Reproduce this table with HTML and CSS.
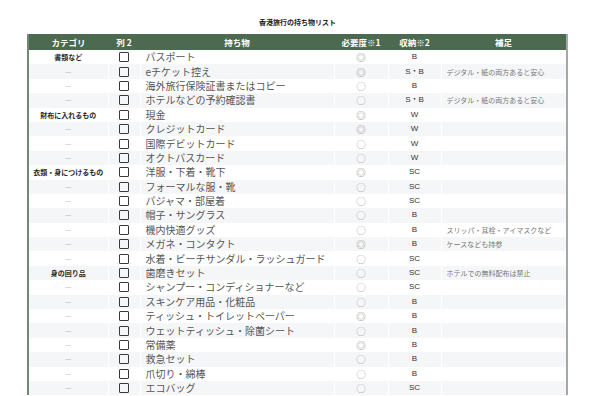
FILE: index.html
```html
<!DOCTYPE html>
<html lang="ja">
<head>
<meta charset="utf-8">
<title>香港旅行の持ち物リスト</title>
<link rel="stylesheet" href="styles.css">
</head>
<body>
<div class="page">
  <h1 class="title">香港旅行の持ち物リスト</h1>
  <table class="list">
    <colgroup>
      <col class="c-cat"><col class="c-chk"><col class="c-item"><col class="c-need"><col class="c-store"><col class="c-note">
    </colgroup>
    <thead>
      <tr><th>カテゴリ</th><th>列 2</th><th>持ち物</th><th>必要度※1</th><th>収納※2</th><th>補足</th></tr>
    </thead>
    <tbody>
      <tr><td class="cat">書類など</td><td class="chk"><span class="box"></span></td><td class="item">パスポート</td><td class="need dbl">◎</td><td class="store">B</td><td class="note"></td></tr>
      <tr><td class="cat dash">—</td><td class="chk"><span class="box"></span></td><td class="item">eチケット控え</td><td class="need dbl">◎</td><td class="store">S・B</td><td class="note">デジタル・紙の両方あると安心</td></tr>
      <tr><td class="cat dash">—</td><td class="chk"><span class="box"></span></td><td class="item">海外旅行保険証書またはコピー</td><td class="need">○</td><td class="store">B</td><td class="note"></td></tr>
      <tr><td class="cat dash">—</td><td class="chk"><span class="box"></span></td><td class="item">ホテルなどの予約確認書</td><td class="need">○</td><td class="store">S・B</td><td class="note">デジタル・紙の両方あると安心</td></tr>
      <tr><td class="cat">財布に入れるもの</td><td class="chk"><span class="box"></span></td><td class="item">現金</td><td class="need dbl">◎</td><td class="store">W</td><td class="note"></td></tr>
      <tr><td class="cat dash">—</td><td class="chk"><span class="box"></span></td><td class="item">クレジットカード</td><td class="need dbl">◎</td><td class="store">W</td><td class="note"></td></tr>
      <tr><td class="cat dash">—</td><td class="chk"><span class="box"></span></td><td class="item">国際デビットカード</td><td class="need">○</td><td class="store">W</td><td class="note"></td></tr>
      <tr><td class="cat dash">—</td><td class="chk"><span class="box"></span></td><td class="item">オクトパスカード</td><td class="need">○</td><td class="store">W</td><td class="note"></td></tr>
      <tr><td class="cat">衣類・身につけるもの</td><td class="chk"><span class="box"></span></td><td class="item">洋服・下着・靴下</td><td class="need dbl">◎</td><td class="store">SC</td><td class="note"></td></tr>
      <tr><td class="cat dash">—</td><td class="chk"><span class="box"></span></td><td class="item">フォーマルな服・靴</td><td class="need">○</td><td class="store">SC</td><td class="note"></td></tr>
      <tr><td class="cat dash">—</td><td class="chk"><span class="box"></span></td><td class="item">パジャマ・部屋着</td><td class="need">○</td><td class="store">SC</td><td class="note"></td></tr>
      <tr><td class="cat dash">—</td><td class="chk"><span class="box"></span></td><td class="item">帽子・サングラス</td><td class="need">○</td><td class="store">B</td><td class="note"></td></tr>
      <tr><td class="cat dash">—</td><td class="chk"><span class="box"></span></td><td class="item">機内快適グッズ</td><td class="need">○</td><td class="store">B</td><td class="note">スリッパ・耳栓・アイマスクなど</td></tr>
      <tr><td class="cat dash">—</td><td class="chk"><span class="box"></span></td><td class="item">メガネ・コンタクト</td><td class="need dbl">◎</td><td class="store">B</td><td class="note">ケースなども持参</td></tr>
      <tr><td class="cat dash">—</td><td class="chk"><span class="box"></span></td><td class="item">水着・ビーチサンダル・ラッシュガード</td><td class="need">○</td><td class="store">SC</td><td class="note"></td></tr>
      <tr><td class="cat">身の回り品</td><td class="chk"><span class="box"></span></td><td class="item">歯磨きセット</td><td class="need">○</td><td class="store">SC</td><td class="note">ホテルでの無料配布は禁止</td></tr>
      <tr><td class="cat dash">—</td><td class="chk"><span class="box"></span></td><td class="item">シャンプー・コンディショナーなど</td><td class="need">○</td><td class="store">SC</td><td class="note"></td></tr>
      <tr><td class="cat dash">—</td><td class="chk"><span class="box"></span></td><td class="item">スキンケア用品・化粧品</td><td class="need">○</td><td class="store">B</td><td class="note"></td></tr>
      <tr><td class="cat dash">—</td><td class="chk"><span class="box"></span></td><td class="item">ティッシュ・トイレットペーパー</td><td class="need dbl">◎</td><td class="store">B</td><td class="note"></td></tr>
      <tr><td class="cat dash">—</td><td class="chk"><span class="box"></span></td><td class="item">ウェットティッシュ・除菌シート</td><td class="need">○</td><td class="store">B</td><td class="note"></td></tr>
      <tr><td class="cat dash">—</td><td class="chk"><span class="box"></span></td><td class="item">常備薬</td><td class="need dbl">◎</td><td class="store">B</td><td class="note"></td></tr>
      <tr><td class="cat dash">—</td><td class="chk"><span class="box"></span></td><td class="item">救急セット</td><td class="need">○</td><td class="store">B</td><td class="note"></td></tr>
      <tr><td class="cat dash">—</td><td class="chk"><span class="box"></span></td><td class="item">爪切り・綿棒</td><td class="need">○</td><td class="store">B</td><td class="note"></td></tr>
      <tr><td class="cat dash">—</td><td class="chk"><span class="box"></span></td><td class="item">エコバッグ</td><td class="need">○</td><td class="store">SC</td><td class="note"></td></tr>
    </tbody>
  </table>
</div>
</body>
</html>
```

FILE: styles.css
```css
html, body {
  margin: 0;
  padding: 0;
  background: #fff;
}
body {
  font-family: "Noto Sans CJK JP", "Noto Sans", "Liberation Sans", sans-serif;
  color: #333;
}
.page {
  padding: 18px 0 0 27px;
  width: 541px;
}
.title {
  margin: 0 0 8px 0;
  font-size: 7px;
  line-height: 8px;
  font-weight: 700;
  color: #222;
  text-align: center;
}
.list {
  width: 541px;
  table-layout: fixed;
  border-collapse: collapse;
  border-left: 2px solid #6f8a74;
  border-right: 2px solid #a5a9a6;
}
.c-cat { width: 80px; }
.c-chk { width: 32px; }
.c-item { width: 194px; }
.c-need { width: 54px; }
.c-store { width: 53px; }
.c-note { width: 126px; }
.list th {
  background: #4b6a50;
  color: #fff;
  font-size: 8.5px;
  font-weight: 700;
  height: 16px;
  padding: 0;
  line-height: 16px;
  text-align: center;
}
.list td {
  height: 14.4px;
  padding: 0;
  line-height: 12px;
  text-align: center;
  vertical-align: middle;
  border-left: 1px solid #fff;
  white-space: nowrap;
  overflow: visible;
}
.list td:first-child { border-left: none; }
.list tbody tr:nth-child(even) td {
  background: #f5f6f7;
}
.cat {
  font-size: 7px;
  font-weight: 700;
  color: #2a2a2a;
}
.list td.cat.dash {
  font-family: "Liberation Sans", sans-serif;
  font-weight: 400;
  font-size: 6px;
  color: #a8a8a8;
}
.list td.chk {
  line-height: 0;
  font-size: 0;
}
.box {
  display: block;
  margin: 0 auto;
  width: 8px;
  height: 8px;
  border: 1.5px solid #3a3a3a;
  border-radius: 1px;
}
.list td.item {
  text-align: left;
  padding-left: 5px;
  font-size: 10px;
  color: #555;
}
.need {
  font-size: 9.5px;
  color: #a8a8a8;
}
.need.dbl {
  color: #888;
}
.store {
  font-family: "Liberation Sans", "Noto Sans CJK JP", sans-serif;
  font-size: 8px;
  color: #333;
}
.list td.note {
  text-align: left;
  padding-left: 5px;
  font-size: 7px;
  color: #777;
}
```
